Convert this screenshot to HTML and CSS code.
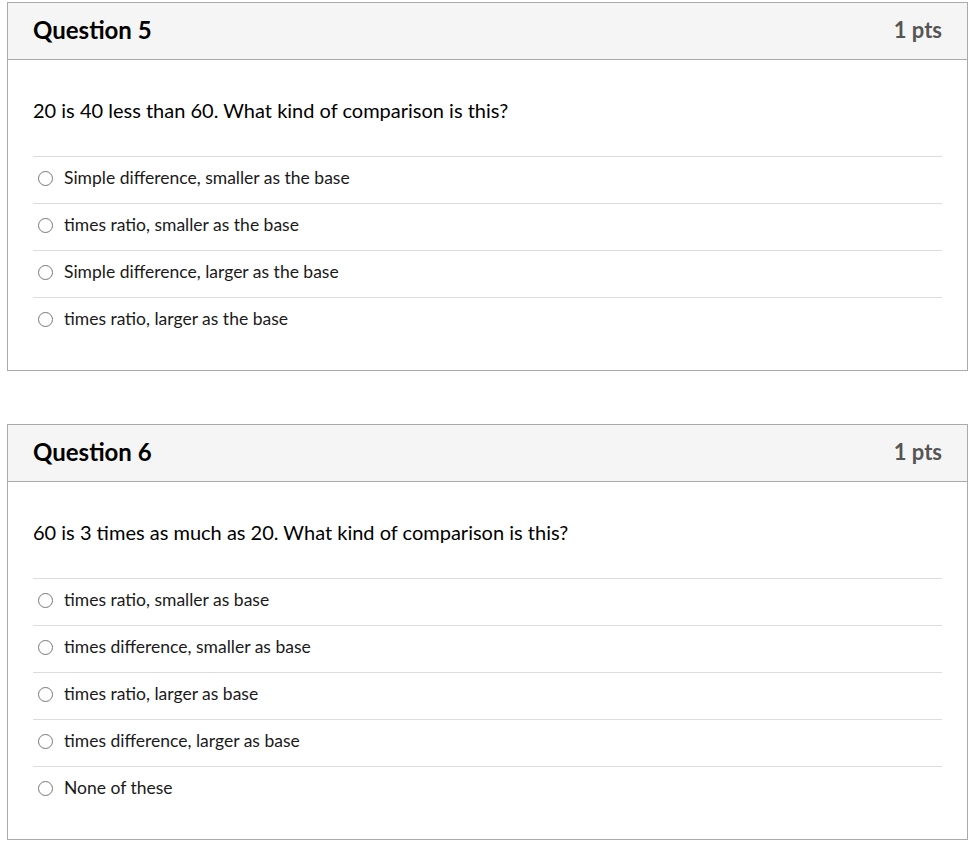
FILE: index.html
```html
<!DOCTYPE html>
<html lang="en">
<head>
<meta charset="utf-8">
<title>Quiz</title>
<link rel="stylesheet" href="styles.css">
</head>
<body>
<div class="quiz">
  <section class="question">
    <header class="question-header">
      <h2 class="question-name">Question 5</h2>
      <span class="question-points">1 pts</span>
    </header>
    <div class="question-body">
      <p class="question-text">20 is 40 less than 60. What kind of comparison is this?</p>
      <ul class="answers">
        <li class="answer"><label><span class="radio"></span>Simple difference, smaller as the base</label></li>
        <li class="answer"><label><span class="radio"></span>times ratio, smaller as the base</label></li>
        <li class="answer"><label><span class="radio"></span>Simple difference, larger as the base</label></li>
        <li class="answer"><label><span class="radio"></span>times ratio, larger as the base</label></li>
      </ul>
    </div>
  </section>

  <section class="question">
    <header class="question-header">
      <h2 class="question-name">Question 6</h2>
      <span class="question-points">1 pts</span>
    </header>
    <div class="question-body">
      <p class="question-text">60 is 3 times as much as 20. What kind of comparison is this?</p>
      <ul class="answers">
        <li class="answer"><label><span class="radio"></span>times ratio, smaller as base</label></li>
        <li class="answer"><label><span class="radio"></span>times difference, smaller as base</label></li>
        <li class="answer"><label><span class="radio"></span>times ratio, larger as base</label></li>
        <li class="answer"><label><span class="radio"></span>times difference, larger as base</label></li>
        <li class="answer"><label><span class="radio"></span>None of these</label></li>
      </ul>
    </div>
  </section>
</div>
</body>
</html>
```

FILE: styles.css
```css
html, body {
  margin: 0;
  padding: 0;
  background: #fff;
}

body {
  font-family: Lato, "Noto Sans", sans-serif;
  color: #1a1a1a;
}

.quiz {
  padding: 2px 5px 0 7px;
  display: flex;
  flex-direction: column;
  gap: 53px;
}

.question {
  border: 1px solid #aaaaaa;
  background: #fff;
}

.question-header {
  height: 56px;
  box-sizing: border-box;
  padding: 0 25px 3px;
  background: #f5f5f5;
  border-bottom: 1px solid #aaaaaa;
  display: flex;
  align-items: center;
  justify-content: space-between;
}

.question-header {
  height: 57px;
}

.question-name {
  margin: 0;
  font-size: 24px;
  font-weight: 700;
  color: #000;
}

.question-points {
  font-size: 22px;
  font-weight: 700;
  color: #555;
}

.question-body {
  padding: 37px 25px 26px;
}

.question-text {
  margin: 0 0 33px;
  font-size: 20px;
  line-height: 26px;
  color: #000;
}

.answers {
  list-style: none;
  margin: 0;
  padding: 0;
}

.answer {
  border-top: 1px solid #dcdcdc;
  height: 46px;
  box-sizing: content-box;
  display: flex;
  align-items: center;
  padding-bottom: 0;
}

.answer label {
  display: flex;
  align-items: center;
  font-size: 17.5px;
  line-height: 24px;
  margin-top: -4px;
  color: #1a1a1a;
}

.radio {
  width: 13px;
  height: 13px;
  border: 1px solid #777;
  border-radius: 50%;
  margin: 0 11px 0 5px;
  flex: none;
}
```
